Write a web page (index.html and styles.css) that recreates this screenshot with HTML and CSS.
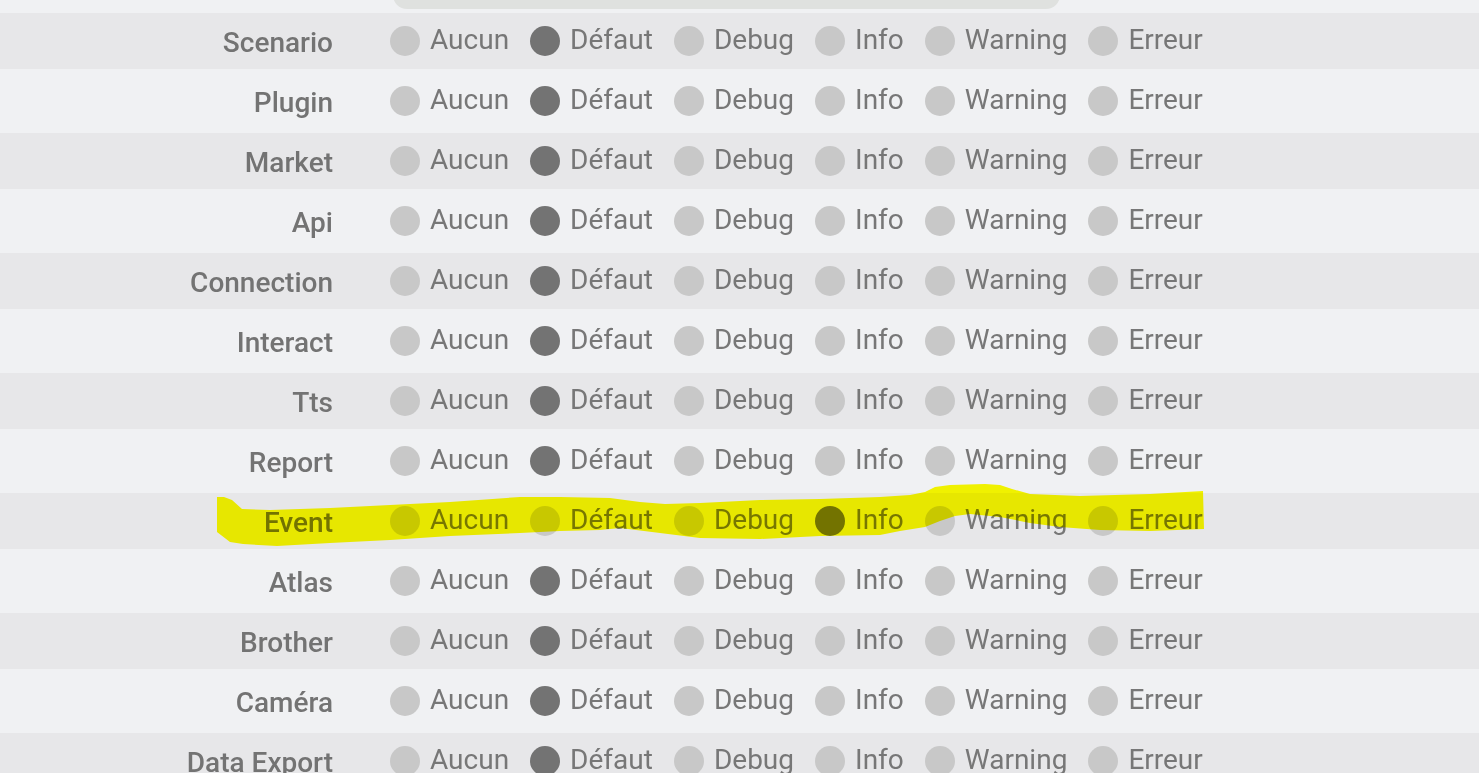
FILE: index.html
```html
<!DOCTYPE html>
<html lang="fr">

<head>
    <meta charset="UTF-8">
    <meta name="viewport" content="width=device-width, initial-scale=1.0">
    <title>Niveaux de log</title>
    <link rel="stylesheet" href="styles.css">
</head>

<body>
    <div class="page">
        <div class="panel-end"></div>

        <!-- niveaux de log par module -->
        <div class="rows">
            <div class="row">
                <div class="label">Scenario</div>
                <div class="options">
                    <span class="opt"><span class="dot"></span>Aucun</span>
                    <span class="opt"><span class="dot on"></span>Défaut</span>
                    <span class="opt"><span class="dot"></span>Debug</span>
                    <span class="opt"><span class="dot"></span>Info</span>
                    <span class="opt"><span class="dot"></span>Warning</span>
                    <span class="opt"><span class="dot"></span>Erreur</span>
                </div>
            </div>
            <div class="row">
                <div class="label">Plugin</div>
                <div class="options">
                    <span class="opt"><span class="dot"></span>Aucun</span>
                    <span class="opt"><span class="dot on"></span>Défaut</span>
                    <span class="opt"><span class="dot"></span>Debug</span>
                    <span class="opt"><span class="dot"></span>Info</span>
                    <span class="opt"><span class="dot"></span>Warning</span>
                    <span class="opt"><span class="dot"></span>Erreur</span>
                </div>
            </div>
            <div class="row">
                <div class="label">Market</div>
                <div class="options">
                    <span class="opt"><span class="dot"></span>Aucun</span>
                    <span class="opt"><span class="dot on"></span>Défaut</span>
                    <span class="opt"><span class="dot"></span>Debug</span>
                    <span class="opt"><span class="dot"></span>Info</span>
                    <span class="opt"><span class="dot"></span>Warning</span>
                    <span class="opt"><span class="dot"></span>Erreur</span>
                </div>
            </div>
            <div class="row">
                <div class="label">Api</div>
                <div class="options">
                    <span class="opt"><span class="dot"></span>Aucun</span>
                    <span class="opt"><span class="dot on"></span>Défaut</span>
                    <span class="opt"><span class="dot"></span>Debug</span>
                    <span class="opt"><span class="dot"></span>Info</span>
                    <span class="opt"><span class="dot"></span>Warning</span>
                    <span class="opt"><span class="dot"></span>Erreur</span>
                </div>
            </div>
            <div class="row">
                <div class="label">Connection</div>
                <div class="options">
                    <span class="opt"><span class="dot"></span>Aucun</span>
                    <span class="opt"><span class="dot on"></span>Défaut</span>
                    <span class="opt"><span class="dot"></span>Debug</span>
                    <span class="opt"><span class="dot"></span>Info</span>
                    <span class="opt"><span class="dot"></span>Warning</span>
                    <span class="opt"><span class="dot"></span>Erreur</span>
                </div>
            </div>
            <div class="row">
                <div class="label">Interact</div>
                <div class="options">
                    <span class="opt"><span class="dot"></span>Aucun</span>
                    <span class="opt"><span class="dot on"></span>Défaut</span>
                    <span class="opt"><span class="dot"></span>Debug</span>
                    <span class="opt"><span class="dot"></span>Info</span>
                    <span class="opt"><span class="dot"></span>Warning</span>
                    <span class="opt"><span class="dot"></span>Erreur</span>
                </div>
            </div>
            <div class="row">
                <div class="label">Tts</div>
                <div class="options">
                    <span class="opt"><span class="dot"></span>Aucun</span>
                    <span class="opt"><span class="dot on"></span>Défaut</span>
                    <span class="opt"><span class="dot"></span>Debug</span>
                    <span class="opt"><span class="dot"></span>Info</span>
                    <span class="opt"><span class="dot"></span>Warning</span>
                    <span class="opt"><span class="dot"></span>Erreur</span>
                </div>
            </div>
            <div class="row">
                <div class="label">Report</div>
                <div class="options">
                    <span class="opt"><span class="dot"></span>Aucun</span>
                    <span class="opt"><span class="dot on"></span>Défaut</span>
                    <span class="opt"><span class="dot"></span>Debug</span>
                    <span class="opt"><span class="dot"></span>Info</span>
                    <span class="opt"><span class="dot"></span>Warning</span>
                    <span class="opt"><span class="dot"></span>Erreur</span>
                </div>
            </div>
            <div class="row">
                <div class="label">Event</div>
                <div class="options">
                    <span class="opt"><span class="dot"></span>Aucun</span>
                    <span class="opt"><span class="dot"></span>Défaut</span>
                    <span class="opt"><span class="dot"></span>Debug</span>
                    <span class="opt"><span class="dot on"></span>Info</span>
                    <span class="opt"><span class="dot"></span>Warning</span>
                    <span class="opt"><span class="dot"></span>Erreur</span>
                </div>
            </div>
            <div class="row">
                <div class="label">Atlas</div>
                <div class="options">
                    <span class="opt"><span class="dot"></span>Aucun</span>
                    <span class="opt"><span class="dot on"></span>Défaut</span>
                    <span class="opt"><span class="dot"></span>Debug</span>
                    <span class="opt"><span class="dot"></span>Info</span>
                    <span class="opt"><span class="dot"></span>Warning</span>
                    <span class="opt"><span class="dot"></span>Erreur</span>
                </div>
            </div>
            <div class="row">
                <div class="label">Brother</div>
                <div class="options">
                    <span class="opt"><span class="dot"></span>Aucun</span>
                    <span class="opt"><span class="dot on"></span>Défaut</span>
                    <span class="opt"><span class="dot"></span>Debug</span>
                    <span class="opt"><span class="dot"></span>Info</span>
                    <span class="opt"><span class="dot"></span>Warning</span>
                    <span class="opt"><span class="dot"></span>Erreur</span>
                </div>
            </div>
            <div class="row">
                <div class="label">Caméra</div>
                <div class="options">
                    <span class="opt"><span class="dot"></span>Aucun</span>
                    <span class="opt"><span class="dot on"></span>Défaut</span>
                    <span class="opt"><span class="dot"></span>Debug</span>
                    <span class="opt"><span class="dot"></span>Info</span>
                    <span class="opt"><span class="dot"></span>Warning</span>
                    <span class="opt"><span class="dot"></span>Erreur</span>
                </div>
            </div>
            <div class="row">
                <div class="label">Data Export</div>
                <div class="options">
                    <span class="opt"><span class="dot"></span>Aucun</span>
                    <span class="opt"><span class="dot on"></span>Défaut</span>
                    <span class="opt"><span class="dot"></span>Debug</span>
                    <span class="opt"><span class="dot"></span>Info</span>
                    <span class="opt"><span class="dot"></span>Warning</span>
                    <span class="opt"><span class="dot"></span>Erreur</span>
                </div>
            </div>
        </div>

        <!-- surlignage -->
        <svg class="marker" width="1479" height="773" viewBox="0 0 1479 773">
            <polygon points="217,497 224,497 232,500 242,509 270,510 330,508 390,505 450,502 520,497 560,497 610,498 640,502 665,504 700,503 760,500 820,499 880,497 910,495 925,492 935,487 950,485 985,484 1000,485 1012,489 1030,494 1080,496 1150,494 1203,491 1204,529 1150,531 1100,530 1060,527 1030,523 1000,517 970,514 955,516 940,521 925,527 900,531 880,535 820,536 760,539 700,538 660,533 620,528 600,530 560,531 520,533 450,536 390,540 330,543 277,546 243,544 230,542 217,532" />
        </svg>
    </div>
</body>

</html>
```

FILE: styles.css
```css
* {
    padding: 0;
    margin: 0;
    box-sizing: border-box;
}

html,
body {
    height: 100%;
    overflow: hidden;
}

body {
    background: #f0f1f3;
    font-family: Roboto, "Liberation Sans", sans-serif;
    color: #757575;
}

.page {
    position: relative;
    display: flow-root;
    height: 100%;
    overflow: hidden;
}

/* bas du panneau au-dessus */
.panel-end {
    width: 667px;
    height: 30px;
    margin: -21px 0 2px 393px;
    background: #dfe1df;
    border-radius: 0 0 14px 14px;
}

/* lignes */
.rows {
    display: flex;
    flex-direction: column;
}

.row {
    display: flex;
    align-items: center;
    height: 60px;
    flex-shrink: 0;
}

.row:nth-child(odd) {
    height: 56px;
    margin: 2px 0;
    background: #e7e7e9;
}

.label {
    width: 333px;
    margin-right: 57px;
    text-align: right;
    font-size: 28px;
    font-weight: 500;
    color: #737373;
    padding-top: 2px;
}

.options {
    display: flex;
    align-items: center;
    gap: 21px;
    font-size: 28px;
    color: #777;
    margin-top: -3px;
}

.opt {
    display: flex;
    align-items: center;
}

.dot {
    width: 30px;
    height: 30px;
    border-radius: 50%;
    background: #c8c8c8;
    margin: 3px 10px 0 0;
    cursor: pointer;
}

.dot.on {
    background: #737373;
}

/* surligneur jaune */
.marker {
    position: absolute;
    top: 0;
    left: 0;
    pointer-events: none;
    mix-blend-mode: multiply;
}

.marker polygon {
    fill: #ffff00;
}
```
